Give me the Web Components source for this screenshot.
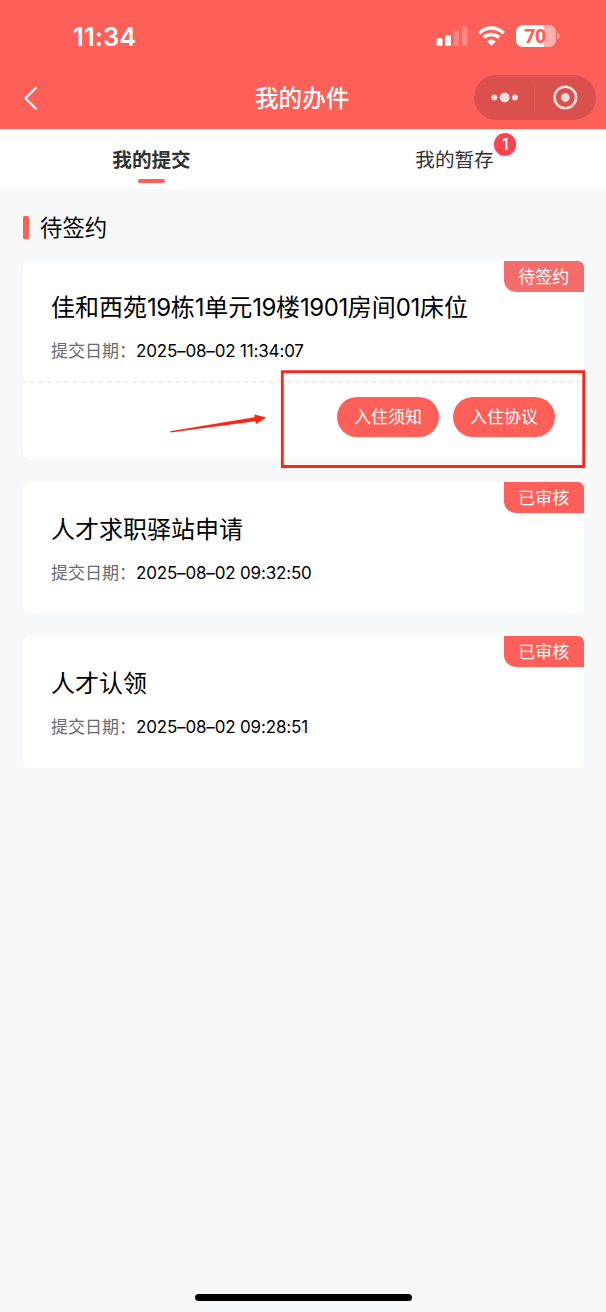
<!DOCTYPE html>
<html lang="zh-CN">
<head>
<meta charset="utf-8">
<title>我的办件</title>
<style>
html,body{margin:0;height:100%}
body{background:#f7f8fa;color:#000;font-family:Inter,"Noto Sans CJK SC",sans-serif;overflow:hidden}
</style>
</head>
<body>
<app-page>
  <status-bar slot="header" time="11:34" battery="70"></status-bar>
  <nav-bar slot="header">我的办件</nav-bar>
  <tab-bar slot="tabs">
    <tab-item active>我的提交</tab-item>
    <tab-item badge="1">我的暂存</tab-item>
  </tab-bar>
  <section-title>待签约</section-title>
  <record-card status="待签约" pending date="2025–08–02 11:34:07" heading="佳和西苑19栋1单元19楼1901房间01床位">
    <pill-button slot="actions">入住须知</pill-button>
    <pill-button slot="actions">入住协议</pill-button>
    <call-out slot="note"></call-out>
  </record-card>
  <record-card status="已审核" date="2025–08–02 09:32:50" heading="人才求职驿站申请"></record-card>
  <record-card status="已审核" date="2025–08–02 09:28:51" heading="人才认领"></record-card>
</app-page>
<script>
const define = (name, html, setup) => customElements.define(name, class extends HTMLElement {
  constructor() {
    super();
    this.attachShadow({ mode: 'open' }).innerHTML = html;
  }
  connectedCallback() { if (setup) setup(this, this.shadowRoot); }
});

define('app-page', `
<style>
:host{display:flex;flex-direction:column;height:1312px;width:606px}
header{background:#ff5f59;height:129px;flex:none}
main{flex:1;display:flex;flex-direction:column;padding:0 22.5px}
footer{height:18.5px;display:flex;justify-content:center;align-items:flex-start}
i{width:217px;height:7.5px;border-radius:4px;background:#000}
</style>
<header><slot name="header"></slot></header>
<slot name="tabs"></slot>
<main><slot></slot></main>
<footer><i></i></footer>`);

define('status-bar', `
<style>
:host{display:flex;height:69px;box-sizing:border-box;padding:3px 46px 0 73px;align-items:center;color:#fff}
b{font-size:25.5px;font-weight:600;letter-spacing:.1px;flex:1}
svg{display:block}
.wifi{margin:0 11px 0 10px}
.bat{display:flex;align-items:center}
.cell{width:40px;height:22px;border-radius:7px;background:linear-gradient(90deg,#fff 70%,#ffafac 70%);color:#ff5f59;font:700 19.5px/22px "Open Sans",sans-serif;text-align:center;letter-spacing:-.3px;text-indent:-2px}
</style>
<b></b>
<svg width="32" height="20" viewBox="0 0 32 20" fill="#fff"><rect x="0.5" y="12" width="6" height="8" rx="1.8"/><rect x="9" y="9" width="6" height="11" rx="1.8"/><g opacity=".25"><rect x="17.5" y="4.5" width="5.5" height="15.5" rx="1.8"/><rect x="26" y="0.5" width="5.5" height="19.5" rx="1.8"/></g></svg>
<svg class="wifi" width="27" height="20" viewBox="0 0 27 20" fill="none" stroke="#fff"><path d="M1.3 7.2C8.2.4 18.8.4 25.7 7.2" stroke-width="3.5"/><path d="M5.8 11.6C10.2 7.4 16.8 7.4 21.2 11.6" stroke-width="3.4"/><path d="M9.2 15.4Q13.5 11.6 17.8 15.4L13.5 19.7Z" fill="#fff" stroke="none"/></svg>
<div class="bat"><div class="cell"></div><svg width="4" height="8" viewBox="0 0 4 8"><path d="M1 .6Q3.6 2 3.6 4T1 7.4Z" fill="#ffafac"/></svg></div>`,
(el, r) => {
  r.querySelector('b').textContent = el.getAttribute('time');
  r.querySelector('.cell').textContent = el.getAttribute('battery');
});

define('nav-bar', `
<style>
:host{display:grid;grid-template-columns:232px 95px 1fr;align-items:center;height:57px;padding:0 10.5px 0 23px;color:#fff}
h1{margin:0;font-size:23.6px;font-weight:500;line-height:34px;padding-top:2px}
.back{display:block}
.capsule{justify-self:end;width:121.5px;height:45px;border-radius:23px;background:#da504c;display:flex;align-items:center}
.capsule svg{display:block}
</style>
<svg class="back" width="16" height="26" viewBox="0 0 16 26"><path d="M13.5 2.3 2.5 13.3 13.5 24.3" fill="none" stroke="#fff" stroke-width="2"/></svg>
<h1><slot></slot></h1>
<div class="capsule"><svg width="122" height="45" viewBox="0 0 122 45" fill="#f8dcdb"><circle cx="20.5" cy="22.5" r="3"/><circle cx="30.8" cy="22.5" r="5"/><circle cx="41.1" cy="22.5" r="3"/><path d="M60.5 9h1v28h-1z" fill="#df6a66" opacity=".6"/><circle cx="91.7" cy="22.5" r="10.8" fill="none" stroke="#f8dcdb" stroke-width="2.7"/><circle cx="91.7" cy="22.5" r="4.4"/></svg></div>`);

define('tab-bar', `
<style>:host{display:grid;grid-template-columns:1fr 1fr;height:59.5px;background:#fff;flex:none}</style>
<slot></slot>`);

define('tab-item', `
<style>
:host{display:flex;flex-direction:column;align-items:center;font-size:19.6px;line-height:30px;padding-top:15.6px;color:#323233}
:host([active]) .label{font-weight:700}
.label{position:relative}
.badge{position:absolute;left:79px;top:-11.6px;width:22px;height:23px;border-radius:12px;background:#fd4250;color:#fff;font-size:16px;line-height:23px;text-align:center;font-weight:500}
.line{width:27px;height:4.5px;border-radius:2.5px;background:#ff5f59;margin-top:4px}
[hidden]{display:none}
</style>
<div class="label"><slot></slot><span class="badge" hidden></span></div><div class="line" hidden></div>`,
(el, r) => {
  const badge = r.querySelector('.badge');
  badge.textContent = el.getAttribute('badge') || '';
  badge.hidden = !el.hasAttribute('badge');
  r.querySelector('.line').hidden = !el.hasAttribute('active');
});

define('section-title', `
<style>
:host{display:flex;align-items:center;height:34px;margin:22px 0 16.5px;font-size:22.4px;line-height:34px}
:host::before{content:"";width:6px;height:23px;border-radius:1.5px;background:#ff5f59;margin-right:11.5px}
</style><slot></slot>`);

define('record-card', `
<style>
:host{display:block;position:relative;background:#fff;border-radius:6px;margin-bottom:22.7px}
.body{padding:30.2px 28.5px 0;height:101.5px}
:host([pending]) .body{padding-top:29px;height:91px}
h2{margin:0;font-size:24px;line-height:36px;font-weight:400;white-space:nowrap}
h2 span{letter-spacing:-.42px}
p{margin:11px 0 0;font-size:17px;line-height:28px;display:flex}
.key{color:#6a6a6c;width:85px}
.date{letter-spacing:-.17px}
.tag{position:absolute;top:0;right:0;width:79.5px;height:31px;line-height:33px;text-align:center;font-size:17px;color:#fff;background:#ff5f59;border-radius:0 6px 0 12px}
:host([pending]) .tag{background:#f56c6c}
.dash{display:none}
.actions{display:none;height:76px;gap:14px;justify-content:flex-end;align-items:flex-start;padding:14px 28.5px 0;box-sizing:border-box}
:host([pending]) .actions{display:flex}
:host([pending]) .dash{display:block}
</style>
<div class="body"><h2></h2><p><span class="key">提交日期：</span><span class="date"></span></p></div>
<svg class="dash" width="561" height="2"><path d="M-1.5 1H561" stroke="#ebedf0" stroke-width="2" stroke-dasharray="4.3 4.25"/></svg>
<div class="actions"><slot name="actions"></slot></div>
<span class="tag"></span>
<slot name="note"></slot>`,
(el, r) => {
  // Digits in the heading are set slightly tighter than the Chinese text.
  r.querySelector('h2').innerHTML = el.getAttribute('heading').replace(/\d+/g, '<span>$&</span>');
  r.querySelector('.date').textContent = el.getAttribute('date');
  r.querySelector('.tag').textContent = el.getAttribute('status');
});

define('pill-button', `
<style>:host{display:block;width:102px;height:40px;border-radius:20px;background:#ff5f59;color:#fff;font-size:17px;line-height:40px;text-align:center}</style>
<slot></slot>`);

define('call-out', `
<style>:host{position:absolute;left:147.5px;top:109px;display:block}svg{display:block}</style>
<svg width="416" height="99" viewBox="170 370 416 99"><path d="M282.3 371.7H583.7V466.5H282.3Z" fill="none" stroke="#ff2316" stroke-width="2.8"/><path d="M170 431.3 254.5 417.3 254.4 414.5 266.3 417.5 256 424 255.3 421.3 170.5 432.5Z" fill="#ff2316"/></svg>`);
</script>
</body>
</html>
